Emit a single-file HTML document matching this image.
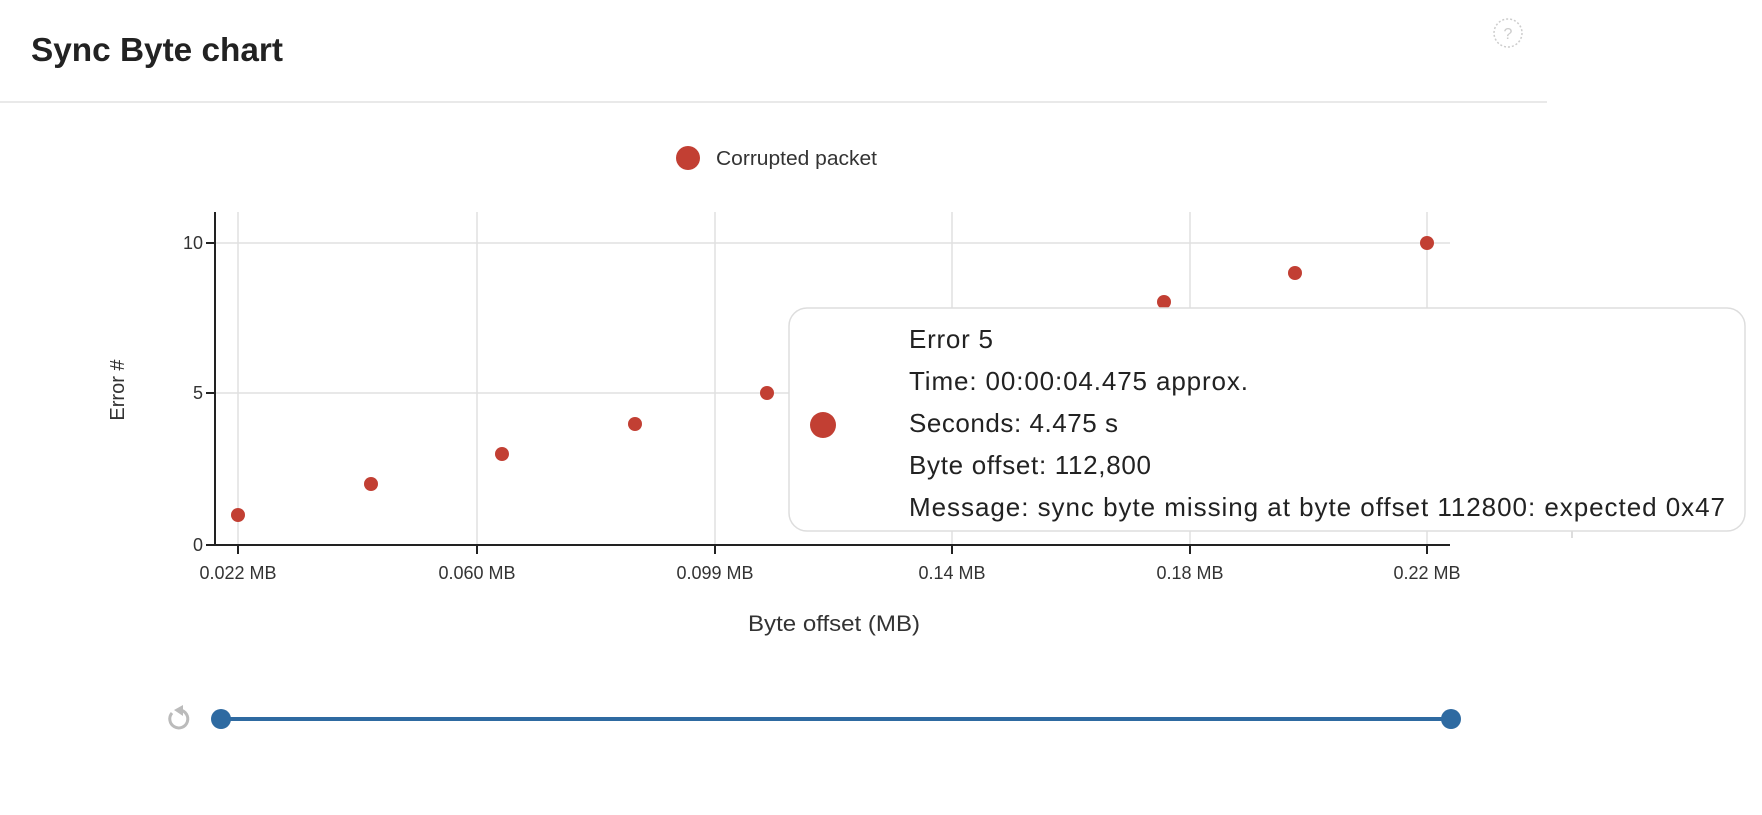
<!DOCTYPE html>
<html><head><meta charset="utf-8"><style>
html,body{margin:0;padding:0;background:#fff;width:1762px;height:815px;overflow:hidden;font-family:"Liberation Sans",sans-serif;}
</style></head><body>
<svg width="1762" height="815" xmlns="http://www.w3.org/2000/svg" style="position:absolute;left:0;top:0" font-family="Liberation Sans, sans-serif">
<text x="31" y="61" font-size="33" font-weight="bold" fill="#222" textLength="252" lengthAdjust="spacingAndGlyphs">Sync Byte chart</text>
<circle cx="1508" cy="33" r="14" fill="none" stroke="#ccc" stroke-width="1.5" stroke-dasharray="2 2"/>
<text x="1508" y="39" font-size="16" fill="#ccc" text-anchor="middle">?</text>
<line x1="0" y1="102" x2="1547" y2="102" stroke="#e2e2e2" stroke-width="1.5"/>
<circle cx="688" cy="158" r="12" fill="#c23f33"/>
<text x="716" y="165" font-size="20" fill="#333" textLength="161" lengthAdjust="spacingAndGlyphs">Corrupted packet</text>
<g stroke="#e0e0e0" stroke-width="1.5">
<line x1="215" y1="243" x2="1450" y2="243"/><line x1="215" y1="393" x2="1450" y2="393"/>
<line x1="238" y1="212" x2="238" y2="545"/><line x1="477" y1="212" x2="477" y2="545"/>
<line x1="715" y1="212" x2="715" y2="545"/><line x1="952" y1="212" x2="952" y2="545"/>
<line x1="1190" y1="212" x2="1190" y2="545"/><line x1="1427" y1="212" x2="1427" y2="545"/>
</g>
<g stroke="#222" stroke-width="2">
<line x1="215" y1="212" x2="215" y2="546"/><line x1="214" y1="545" x2="1450" y2="545"/>
<line x1="206" y1="243" x2="215" y2="243"/><line x1="206" y1="393" x2="215" y2="393"/><line x1="206" y1="545" x2="215" y2="545"/>
<line x1="238" y1="545" x2="238" y2="554"/><line x1="477" y1="545" x2="477" y2="554"/><line x1="715" y1="545" x2="715" y2="554"/>
<line x1="952" y1="545" x2="952" y2="554"/><line x1="1190" y1="545" x2="1190" y2="554"/><line x1="1427" y1="545" x2="1427" y2="554"/>
</g>
<g font-size="18" fill="#333" text-anchor="end">
<text x="203" y="249">10</text><text x="203" y="399">5</text><text x="203" y="551">0</text>
</g>
<g font-size="18" fill="#333" text-anchor="middle">
<text x="238" y="579">0.022 MB</text><text x="477" y="579">0.060 MB</text><text x="715" y="579">0.099 MB</text>
<text x="952" y="579">0.14 MB</text><text x="1190" y="579">0.18 MB</text><text x="1427" y="579">0.22 MB</text>
</g>
<text x="748" y="631" font-size="22" fill="#333" textLength="172" lengthAdjust="spacingAndGlyphs">Byte offset (MB)</text>
<text transform="translate(124,390) rotate(-90)" font-size="20" fill="#333" text-anchor="middle">Error #</text>
<g fill="#c23f33">
<circle cx="238" cy="515" r="7"/><circle cx="371" cy="484" r="7"/><circle cx="502" cy="454" r="7"/>
<circle cx="635" cy="424" r="7"/><circle cx="767" cy="393" r="7"/><circle cx="1164" cy="302" r="7"/>
<circle cx="1295" cy="273" r="7"/><circle cx="1427" cy="243" r="7"/>
</g>
<line x1="1572" y1="518" x2="1572" y2="538" stroke="#ddd" stroke-width="2"/>
<rect x="789" y="308" width="956" height="223" rx="18" fill="#fff" stroke="#ddd" stroke-width="1.5"/>
<circle cx="823" cy="425" r="13" fill="#c23f33"/>
<g font-size="26" fill="#222" lengthAdjust="spacingAndGlyphs">
<text x="909" y="348" textLength="84">Error 5</text>
<text x="909" y="390" textLength="339">Time: 00:00:04.475 approx.</text>
<text x="909" y="432" textLength="209">Seconds: 4.475 s</text>
<text x="909" y="474" textLength="242">Byte offset: 112,800</text>
<text x="909" y="516" textLength="816">Message: sync byte missing at byte offset 112800: expected 0x47</text>
</g>
<path d="M172 713 A9 9 0 1 0 180 710" fill="none" stroke="#bbb" stroke-width="3"/>
<path d="M183 705 L183 716 L174 710 Z" fill="#bbb"/>
<line x1="221" y1="719" x2="1451" y2="719" stroke="#2e6aa1" stroke-width="4"/>
<circle cx="221" cy="719" r="10" fill="#2e6aa1"/>
<circle cx="1451" cy="719" r="10" fill="#2e6aa1"/>
</svg>
</body></html>
